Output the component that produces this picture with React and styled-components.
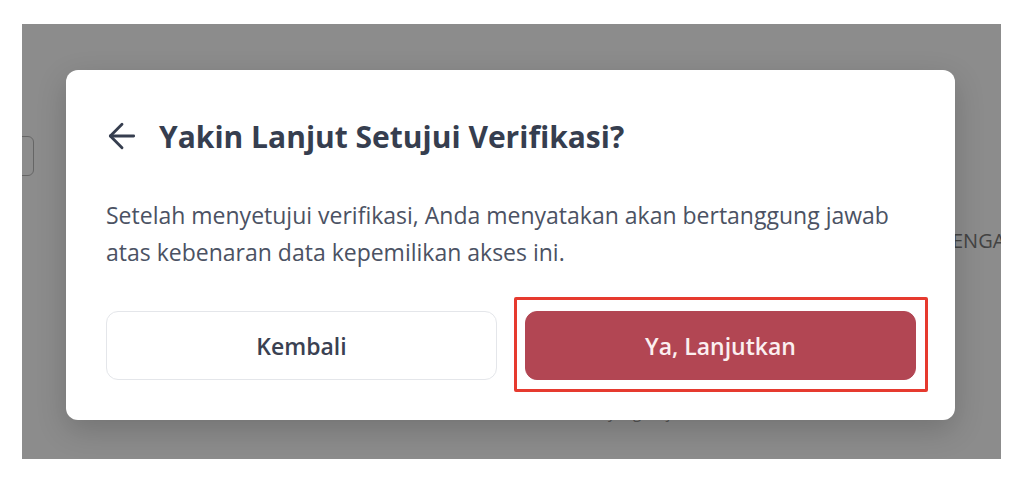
import React from 'react';
import styled, { createGlobalStyle } from 'styled-components';
import { ArrowLeft } from 'lucide-react';

const GlobalStyle = createGlobalStyle`
  html, body {
    margin: 0;
    padding: 0;
    background: #ffffff;
  }
  body {
    font-family: "Open Sans", "Noto Sans", sans-serif;
    -webkit-font-smoothing: antialiased;
  }
`;

const Frame = styled.div`
  position: relative;
  margin: 24px 0 0 22px;
  width: 979px;
  height: 435px;
  overflow: hidden;
  background: #ffffff;
`;

/* the page sitting behind the dialog */
const BackPage = styled.div`
  display: flex;
  flex-direction: column;
  height: 100%;
  box-sizing: border-box;
  padding-top: 112px;
`;

const BackRow = styled.div`
  display: flex;
  justify-content: space-between;
  align-items: flex-start;
`;

const FilterBox = styled.div`
  width: 120px;
  height: 40px;
  margin-left: -108px;
  box-sizing: border-box;
  border: 1px solid #b9b9b9;
  border-radius: 6px;
  background: #fff;
`;

const ColumnHead = styled.div`
  margin-top: 91px;
  margin-right: -52px;
  font-size: 20px;
  color: #7a7a7a;
  white-space: nowrap;
`;

const BackNote = styled.div`
  margin-top: auto;
  margin-bottom: 37px;
  padding-left: 488px;
  font-size: 15px;
  color: #9a9a9a;
`;

const Overlay = styled.div`
  position: absolute;
  inset: 0;
  background: rgba(0, 0, 0, 0.45);
  display: flex;
  justify-content: center;
  align-items: flex-start;
  padding-top: 46px;
  padding-right: 2px;
  box-sizing: border-box;
`;

const Dialog = styled.div`
  width: 889px;
  box-sizing: border-box;
  background: #ffffff;
  border-radius: 12px;
  padding: 46px 39px 40px 40px;
  box-shadow: 0 10px 30px rgba(0, 0, 0, 0.18);
`;

const Header = styled.div`
  display: flex;
  align-items: center;
  gap: 17px;
  height: 40px;
  color: #363e4f;
  svg {
    margin-left: -4px;
    flex-shrink: 0;
  }
`;

const Title = styled.h2`
  margin: 0;
  font-size: 30px;
  font-weight: 700;
  color: #363e4f;
  white-space: nowrap;
`;

const Message = styled.p`
  margin: 41px 0 0;
  font-size: 23px;
  line-height: 37px;
  color: #4b5263;
  max-width: 810px;
`;

const Actions = styled.div`
  display: grid;
  grid-template-columns: 1fr 1fr;
  gap: 28px;
  margin-top: 40px;
`;

const Button = styled.button`
  height: 69px;
  width: 100%;
  border-radius: 12px;
  font-family: inherit;
  font-size: 23px;
  font-weight: 600;
  cursor: pointer;
  border: 1px solid ${({ primary }) => (primary ? '#b24653' : '#e4e6ea')};
  background: ${({ primary }) => (primary ? '#b24653' : '#ffffff')};
  color: ${({ primary }) => (primary ? '#fbeff0' : '#3a4152')};
`;

const Highlight = styled.div`
  position: relative;
  &::after {
    content: '';
    position: absolute;
    top: -14px;
    left: -11px;
    right: -12px;
    bottom: -12px;
    border: 3px solid #e63a2f;
    border-radius: 2px;
    pointer-events: none;
  }
`;

export default function App() {
  return (
    <>
      <GlobalStyle />
      <Frame>
        <BackPage>
          <BackRow>
            <FilterBox />
            <ColumnHead>PENGAJUAN</ColumnHead>
          </BackRow>
          <BackNote>Pastikan data yang diajukan</BackNote>
        </BackPage>
        <Overlay>
          <Dialog>
            <Header>
              <ArrowLeft size={40} strokeWidth={1.7} />
              <Title>Yakin Lanjut Setujui Verifikasi?</Title>
            </Header>
            <Message>
              Setelah menyetujui verifikasi, Anda menyatakan akan bertanggung jawab atas
              kebenaran data kepemilikan akses ini.
            </Message>
            <Actions>
              <Button>Kembali</Button>
              <Highlight>
                <Button primary>Ya, Lanjutkan</Button>
              </Highlight>
            </Actions>
          </Dialog>
        </Overlay>
      </Frame>
    </>
  );
}
